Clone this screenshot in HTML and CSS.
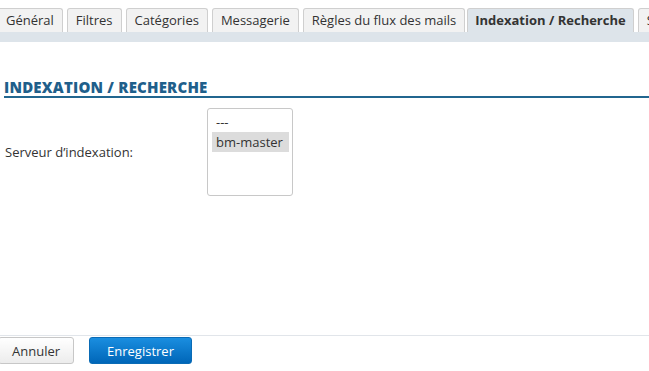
FILE: index.html
```html
<!DOCTYPE html>
<html lang="fr">
<head>
  <meta charset="UTF-8">
  <title>Indexation / Recherche</title>
  <link rel="stylesheet" href="styles.css">
</head>
<body>
  <div class="page">
    <ul class="tabs">
      <li class="tab first">Général</li>
      <li class="tab">Filtres</li>
      <li class="tab">Catégories</li>
      <li class="tab">Messagerie</li>
      <li class="tab">Règles du flux des mails</li>
      <li class="tab active">Indexation / Recherche</li>
      <li class="tab">Sécurité</li>
    </ul>
    <div class="band"></div>

    <div class="content">
      <h2 class="section-title">Indexation / Recherche</h2>
      <div class="field">
        <label for="server">Serveur d’indexation:</label>
        <div class="listbox" id="server">
          <div class="option">---</div>
          <div class="option selected">bm-master</div>
        </div>
      </div>
    </div>

    <div class="footer">
      <button class="btn">Annuler</button>
      <button class="btn primary">Enregistrer</button>
    </div>
  </div>
</body>
</html>
```

FILE: styles.css
```css
body {
  margin: 0;
  font-family: "Open Sans", "Noto Sans", sans-serif;
  color: #333;
  background: #fff;
  overflow: hidden;
}

.page {
  width: 649px;
  height: 371px;
  display: flex;
  flex-direction: column;
}

.tabs {
  list-style: none;
  margin: 0;
  padding: 8px 0 0 0;
  display: flex;
  gap: 4px;
  white-space: nowrap;
  overflow: hidden;
}

.tab {
  height: 23px;
  line-height: 23px;
  padding: 0 8px;
  font-size: 13px;
  color: #333;
  background: #f2f2f2;
  border: 1px solid #cfcfcf;
  border-bottom: none;
  border-radius: 3px 3px 0 0;
  flex-shrink: 0;
}

.tab.first {
  margin-left: -3px;
}

.tab.active {
  background: #dde4ea;
  font-weight: 700;
  padding: 0 7px;
  margin-left: -2px;
}

.band {
  height: 10px;
  background: #dde4ea;
}

.content {
  flex: 1;
  padding: 37px 0 0 4px;
}

.section-title {
  margin: 0;
  font-size: 15px;
  font-weight: 800;
  letter-spacing: 0.2px;
  text-transform: uppercase;
  color: #1f5f8b;
  border-bottom: 2px solid #21668f;
  line-height: 17px;
}

.field {
  display: flex;
  align-items: center;
  margin-top: 10px;
}

.field label {
  width: 202px;
  padding-left: 1px;
  font-size: 13px;
  color: #333;
}

.listbox {
  width: 86px;
  height: 88px;
  border: 1px solid #c8c8c8;
  border-radius: 3px;
  padding: 3px 3px 0 4px;
  box-sizing: border-box;
}

.option {
  font-size: 13px;
  line-height: 20px;
  padding: 0 4px;
}

.option.selected {
  background: #dcdcdc;
}

.footer {
  border-top: 1px solid #e1e5ea;
  padding: 1px 0 7px 0;
  display: flex;
  gap: 15px;
}

.btn {
  height: 27px;
  padding: 0 13px;
  font-family: inherit;
  font-size: 13px;
  color: #333;
  background: linear-gradient(#ffffff, #ececec);
  border: 1px solid #c7c7c7;
  border-radius: 3px;
  margin-left: -2px;
}

.btn.primary {
  margin-left: 0;
  padding: 0 17px;
  color: #fff;
  background: linear-gradient(#1a8ee0, #0066b8);
  border-color: #0a6bb5;
}
```
